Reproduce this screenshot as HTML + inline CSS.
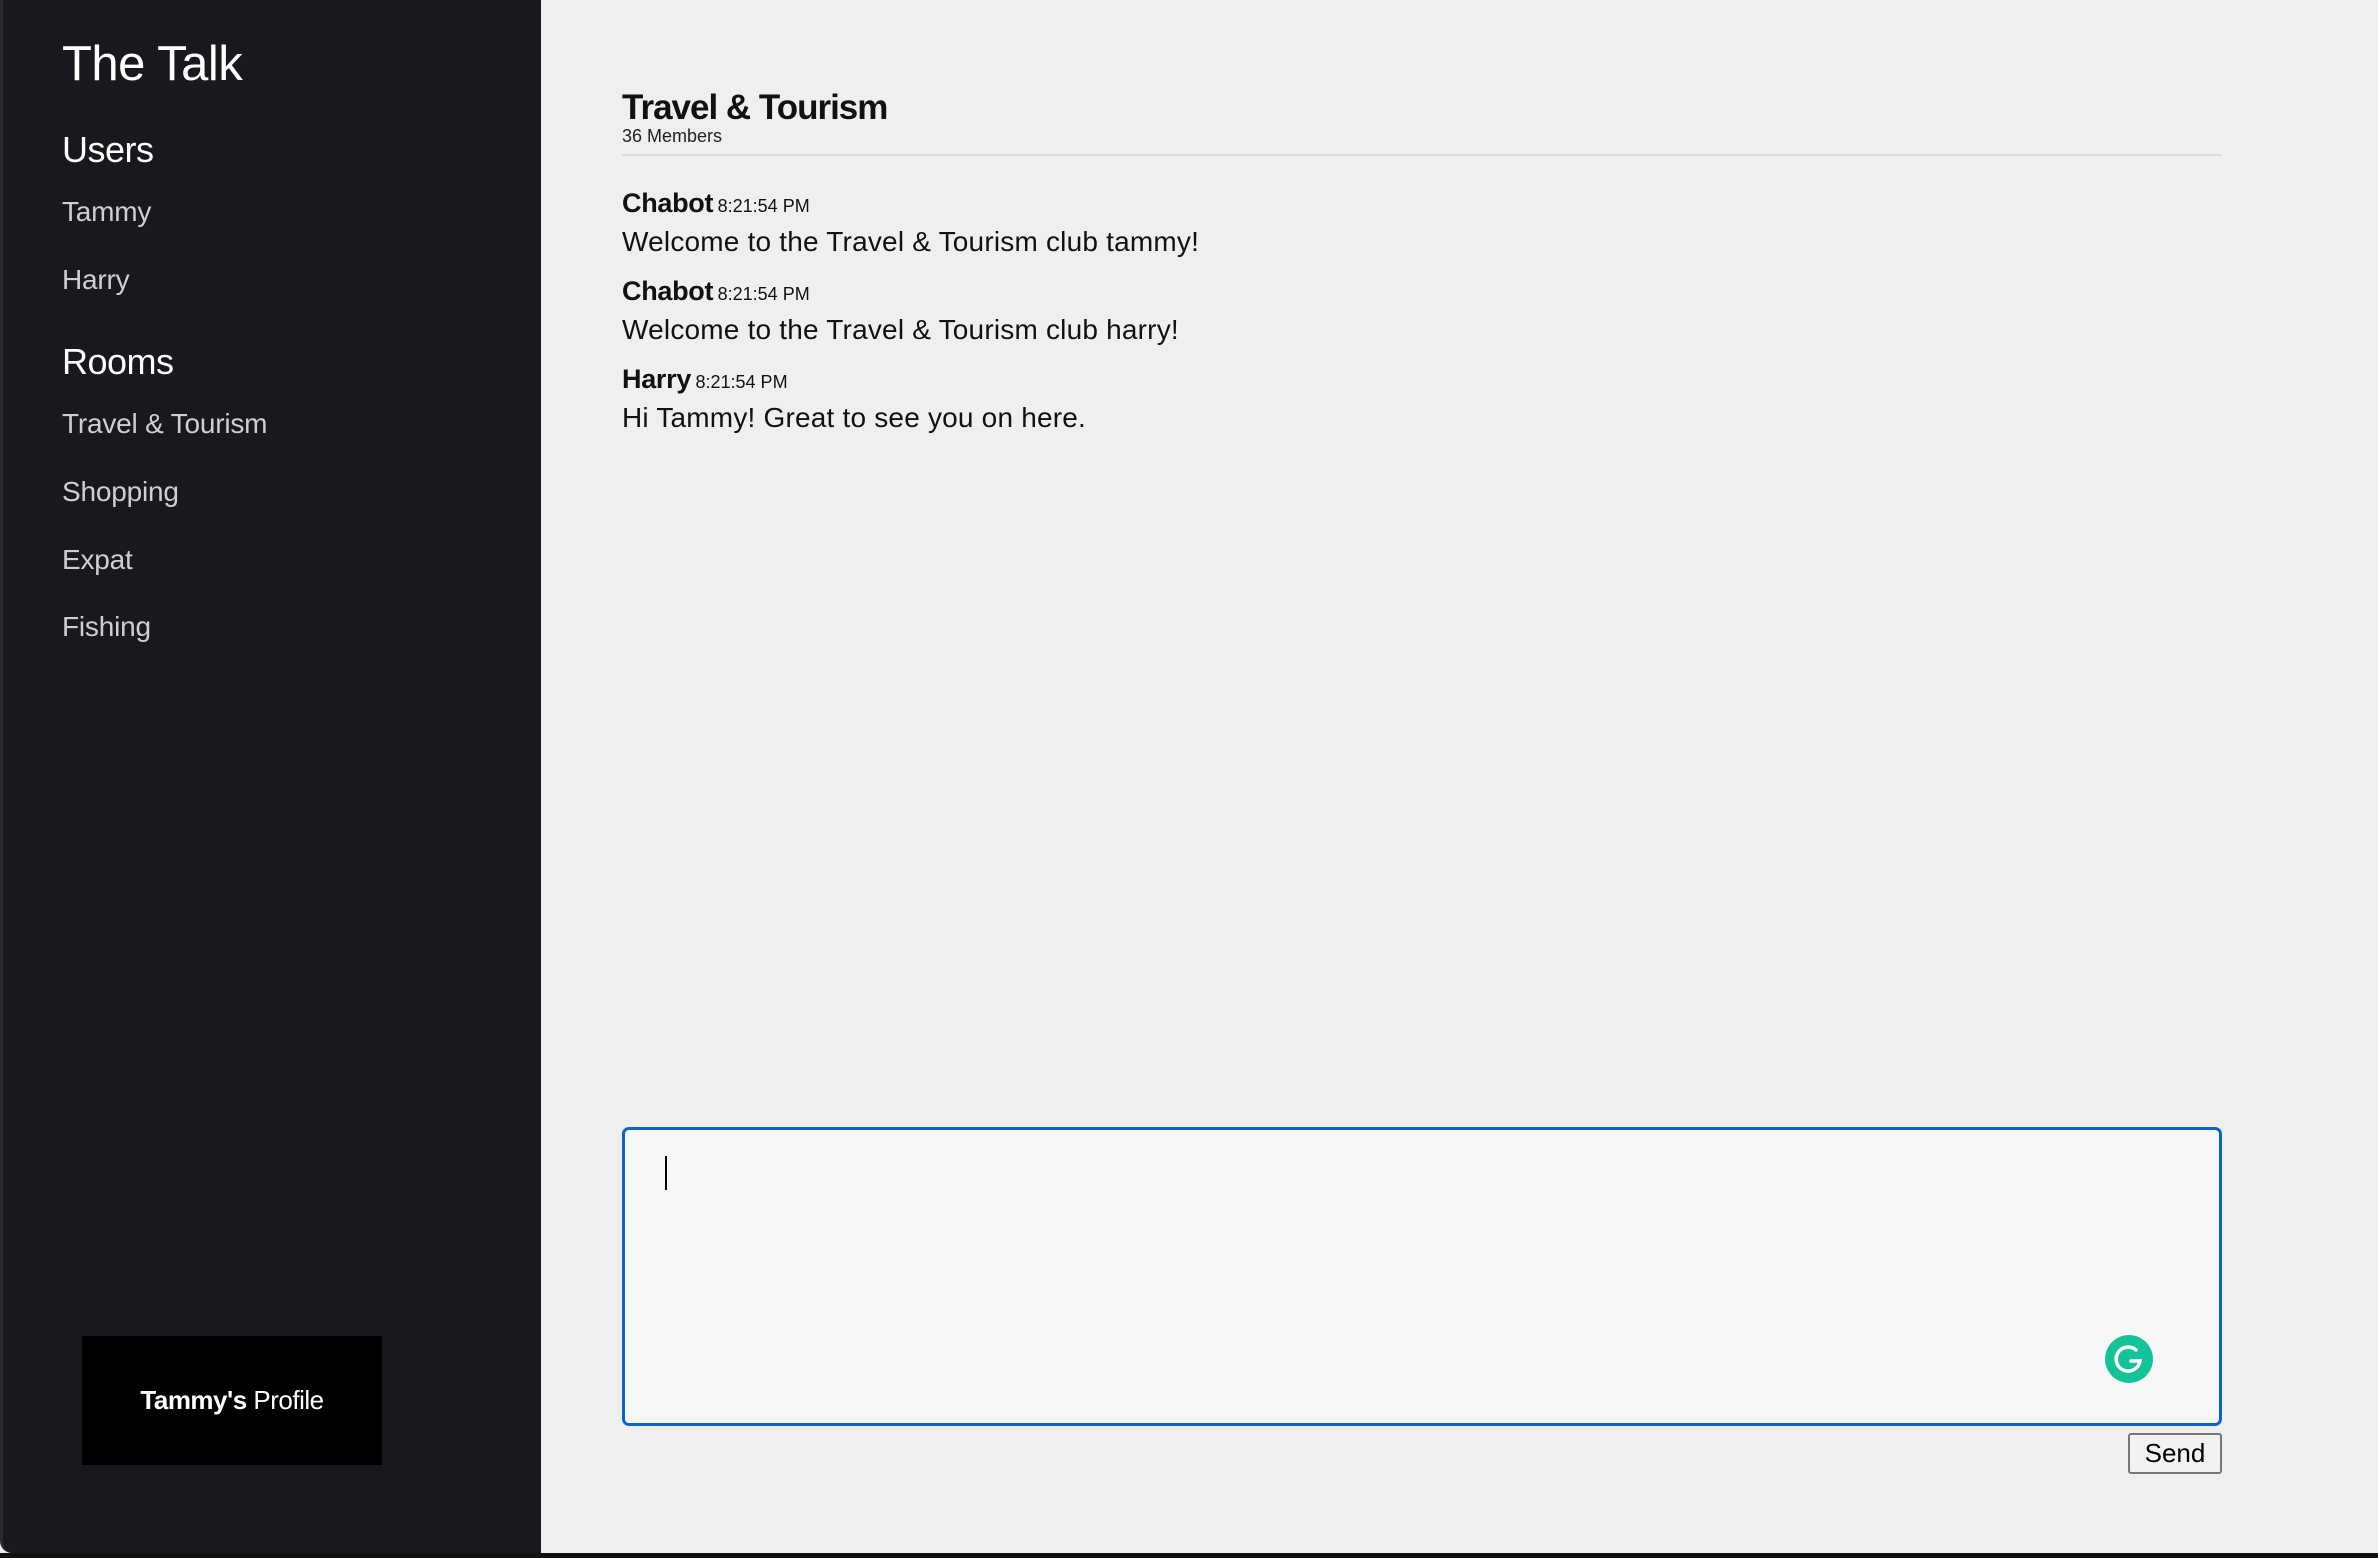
<!DOCTYPE html>
<html><head><meta charset="utf-8"><style>
html,body{margin:0;padding:0;width:2378px;height:1558px;overflow:hidden;background:#efefef;font-family:"Liberation Sans",sans-serif;}
.side{position:absolute;left:0;top:0;width:541px;height:1553px;background:#18191d;border-left:3px solid #2a2a2e;box-sizing:border-box;border-bottom-left-radius:12px;}
.t{position:absolute;left:62px;color:#fff;white-space:nowrap;}
.l{position:absolute;left:62px;color:#cfcfd2;font-size:28px;white-space:nowrap;letter-spacing:-0.2px;}
.prof{position:absolute;left:82px;top:1336px;width:300px;height:129px;background:#000;color:#fff;font-size:26px;display:flex;align-items:center;justify-content:center;letter-spacing:-0.5px;}
.bottom{position:absolute;left:0;top:1553px;width:2378px;height:5px;background:#111;}
.name{font-weight:bold;font-size:27px;color:#111;letter-spacing:-0.3px;}
.time{font-size:18px;color:#111;}
.msg{position:absolute;left:622px;font-size:28px;color:#111;white-space:nowrap;letter-spacing:0.2px;}
.nm{position:absolute;left:622px;white-space:nowrap;}
</style></head><body>
<div class="side">
<div class="t" style="left:59px;top:36px;font-size:49px;letter-spacing:-0.5px;">The Talk</div>
<div class="t" style="left:59px;top:129px;font-size:36px;letter-spacing:-0.5px;">Users</div>
<div class="l" style="left:59px;top:196px;">Tammy</div>
<div class="l" style="left:59px;top:264px;">Harry</div>
<div class="t" style="left:59px;top:341px;font-size:36px;letter-spacing:-0.5px;">Rooms</div>
<div class="l" style="left:59px;top:408px;">Travel &amp; Tourism</div>
<div class="l" style="left:59px;top:476px;">Shopping</div>
<div class="l" style="left:59px;top:544px;">Expat</div>
<div class="l" style="left:59px;top:611px;">Fishing</div>
<div class="prof" style="left:79px;"><b>Tammy's</b>&nbsp;Profile</div>
</div>
<div class="bottom"></div>
<div class="nm" style="top:88px;font-size:35px;font-weight:bold;letter-spacing:-1px;color:#111;">Travel &amp; Tourism</div>
<div class="nm" style="top:126px;font-size:18px;color:#222;">36 Members</div>
<div style="position:absolute;left:622px;top:154px;width:1600px;height:2px;background:#dcdcdc;"></div>
<div class="nm" style="top:188px;"><span class="name">Chabot</span> <span class="time">8:21:54 PM</span></div>
<div class="msg" style="top:226px;">Welcome to the Travel &amp; Tourism club tammy!</div>
<div class="nm" style="top:276px;"><span class="name">Chabot</span> <span class="time">8:21:54 PM</span></div>
<div class="msg" style="top:314px;">Welcome to the Travel &amp; Tourism club harry!</div>
<div class="nm" style="top:364px;"><span class="name">Harry</span> <span class="time">8:21:54 PM</span></div>
<div class="msg" style="top:402px;">Hi Tammy! Great to see you on here.</div>
<div style="position:absolute;left:622px;top:1127px;width:1600px;height:299px;box-sizing:border-box;border:3px solid #0a64d0;border-radius:7px;background:#f7f7f7;"></div>
<div style="position:absolute;left:665px;top:1156px;width:2px;height:34px;background:#000;"></div>
<svg style="position:absolute;left:2105px;top:1335px" width="48" height="48" viewBox="0 0 48 48"><circle cx="24" cy="24" r="24" fill="#15c39a"/><path d="M31 15 A12 12 0 1 0 35 26 H26" fill="none" stroke="#fff" stroke-width="3.5" stroke-linecap="round"/></svg>
<div style="position:absolute;left:2128px;top:1433px;width:94px;height:41px;box-sizing:border-box;border:2px solid #777;border-radius:3px;background:#f2f2f2;font-size:26px;display:flex;align-items:center;justify-content:center;color:#000;">Send</div>
</body></html>
